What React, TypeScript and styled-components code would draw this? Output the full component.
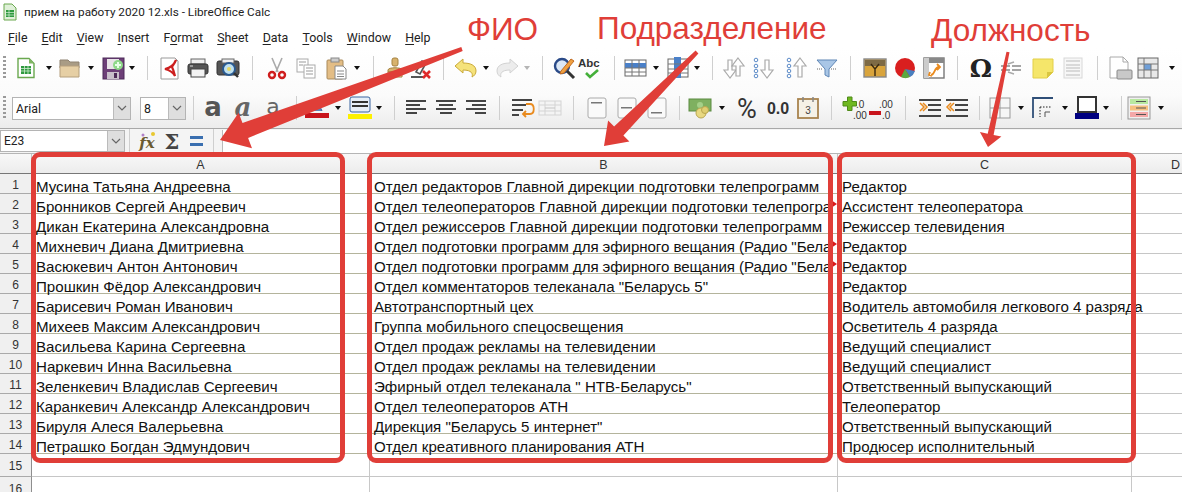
import React from "react";
import styled, { createGlobalStyle } from "styled-components";

const Global = createGlobalStyle`
  html, body { margin: 0; padding: 0; background: #fff; overflow: hidden; }
  #root { width: 1182px; height: 492px; }
`;

const UI = `Roboto, "Open Sans", sans-serif`;
const SHEET = `"Liberation Sans", Arial, sans-serif`;
const RED = "#e03e38";

const Page = styled.div`
  position: relative; width: 1182px; height: 492px; overflow: hidden; background: #fff;
  display: flex; flex-direction: column; font-family: ${UI}; color: #111;
  & > * { flex: none; }
`;
const TitleBar = styled.div`
  height: 24px; display: flex; align-items: center; gap: 7px; padding-left: 3px;
  font-size: 11.75px; color: #222;
`;
const MenuBar = styled.div`
  height: 24px; padding: 2px 0 0 8px; box-sizing: border-box; display: flex; align-items: center; gap: 14.1px;
  font-size: 12.4px; color: #222;
  u { text-underline-offset: 2px; }
`;
const MenuItem = styled.span``;
const ToolArea = styled.div`
  height: 80px; display: flex; flex-direction: column;
  background: linear-gradient(#ffffff 0%, #fbfbfb 60%, #ececec 100%);
  border-bottom: 1px solid #a8a8a8;
`;
const Toolbar = styled.div`
  height: 40px; display: flex; align-items: center; overflow: hidden;
`;
const Slot = styled.div<{ $w: number; $left?: boolean }>`
  flex: 0 0 ${p => p.$w}px; width: ${p => p.$w}px; height: 24px;
  display: flex; align-items: center; justify-content: ${p => (p.$left ? "flex-start" : "center")};
  svg { display: block; flex: none; }
`;
const Grip = styled.div`
  width: 3px; height: 24px; margin-left: 3px;
  background: repeating-linear-gradient(#9a9a9a 0 2px, transparent 2px 4px);
`;
const Caret = styled.div<{ $off?: boolean }>`
  width: 0; height: 0; border-left: 3.5px solid transparent; border-right: 3.5px solid transparent;
  border-top: 4px solid ${p => (p.$off ? "#b5b5b5" : "#111")};
`;
const Sep = styled.div`
  width: 1px; height: 24px; background: #cfcfcf;
`;
const Select = styled.div<{ $w: number; $ml: number }>`
  width: ${p => p.$w}px; margin-left: ${p => p.$ml}px; height: 23px; box-sizing: border-box; flex: none;
  display: flex; align-items: center; justify-content: space-between; background: #fff;
  border: 1px solid #b4b4b4; font-size: 12.4px; color: #222; padding-left: 3px;
`;
const SelectBtn = styled.div`
  width: 17px; height: 100%; box-sizing: border-box; background: #dedede; border-left: 1px solid #bbb;
  display: flex; align-items: center; justify-content: center;
`;
const FormulaBar = styled.div`
  height: 24px; display: flex; align-items: center; background: #f4f4f4;
  border-bottom: 1px solid #b5b5b5;
`;
const NameBox = styled(Select)`
  height: 22px; font-size: 12px;
`;
const FormulaBtn = styled.div<{ $w: number }>`
  flex: 0 0 ${p => p.$w}px; height: 24px; display: flex; justify-content: center; align-items: center;
`;
const FormulaInput = styled.div`
  flex: 1; height: 23px; background: #fff; border-left: 1px solid #bbb; margin-left: 4px;
`;
const Sheet = styled.div`
  display: grid; grid-template-columns: 32px 338px 468px 294px 88px;
  grid-auto-rows: min-content; font-family: ${SHEET};
`;
const ColHead = styled.div`
  height: 20px; box-sizing: border-box; padding-top: 3px; background: linear-gradient(#f8f8f8, #ececec);
  border-right: 1px solid #c4c4c4; border-bottom: 1px solid #777;
  display: flex; align-items: center; justify-content: center; font-size: 12.5px; color: #333;
`;
const RowHead = styled.div<{ $h?: number }>`
  box-sizing: border-box; height: ${p => p.$h || 20}px; padding-top: 2px; background: #f0f0f0;
  border-right: 1px solid #8e8e8e; border-bottom: 1px solid #aaa;
  display: flex; align-items: center; justify-content: center; font-size: 12px; color: #333;
`;
const Cell = styled.div<{ $blank?: boolean; $h?: number; $tight?: boolean }>`
  position: relative; box-sizing: border-box; height: ${p => p.$h || 20}px; padding: 2px 0 0 4px;
  border-right: 1px solid #c8c8c8; border-bottom: 1px solid ${p => (p.$blank ? "#c6c6c6" : "#b4b49c")};
  font-size: 15.1px; line-height: 22px; color: #111; white-space: nowrap;
  letter-spacing: ${p => (p.$tight ? "-0.07px" : "0")};
`;
const Marker = styled.i`
  position: absolute; top: 6px; right: 0; width: 0; height: 0;
  border-left: 6px solid #d81818; border-top: 4px solid transparent; border-bottom: 4px solid transparent;
`;
const Frame = styled.div<{ $x: number; $w: number }>`
  position: absolute; left: ${p => p.$x}px; top: 152px; width: ${p => p.$w}px; height: 311px;
  box-sizing: border-box; border: 5px solid ${RED}; border-radius: 9px; pointer-events: none;
`;
const Label = styled.div<{ $x: number; $y: number }>`
  position: absolute; left: ${p => p.$x}px; top: ${p => p.$y}px; font-family: ${SHEET};
  font-size: 31.5px; line-height: 34px; color: ${RED}; white-space: nowrap;
`;
const ArrowLayer = styled.svg`
  position: absolute; left: 0; top: 0; pointer-events: none;
`;

const Svg = ({ children, w = 24, h = 24 }: { children: React.ReactNode; w?: number; h?: number }) => (
  <svg width={w} height={h} viewBox={`0 0 ${w} ${h}`}>{children}</svg>
);
const Chevron = () => (
  <svg width="10" height="7" viewBox="0 0 10 7"><path d="M1 1l4 4 4-4" fill="none" stroke="#666" strokeWidth="1.2" /></svg>
);
const Lines = ({ ys, c = "#444", x = 3 }: { ys: [number, number][]; c?: string; x?: number }) => (
  <>{ys.map(([y, l], i) => <rect key={i} x={x} y={y} width={l} height="2" fill={c} />)}</>
);

const icons: Record<string, React.ReactNode> = {
  newdoc: <Svg><path d="M4 2.500h11l5 5v14H4z" fill="#fff" stroke="#6aa84f" strokeWidth="1.400"/><path d="M15 2.500l5 5h-5z" fill="#7fb561"/><rect x="7" y="10" width="10" height="8" fill="#2f9a3f"/><path d="M7 12.500h10M7 15h10M10.500 10v8M14 10v8" stroke="#cfeccf" strokeWidth=".8"/></Svg>,
  open: <Svg><path d="M2 4h8l2 2h9v6H2z" fill="#a99c85" stroke="#8f8270"/><path d="M2 21V10h19v11z" fill="#e6cfa4" stroke="#b59f7c"/></Svg>,
  save: <Svg><rect x="2" y="2" width="21" height="21" fill="#6d3f78" stroke="#4d2a58"/><rect x="6" y="3" width="12" height="10" fill="#e8e4e8"/><rect x="6" y="16" width="12" height="7" fill="#c9bfcb"/><rect x="13" y="17" width="3" height="5" fill="#4d2a58"/><circle cx="17" cy="9" r="5" fill="#8fd88a"/><path d="M17 6v6M14 9h6" stroke="#e6ffe6" strokeWidth="2"/></Svg>,
  pdf: <Svg><path d="M4 2h14l3 3v18H4z" fill="#fff" stroke="#9a9a9a"/><path d="M19 4c-2 5-6 8-11 9 4 1 8 3 10 7-1-4-2-7-3-9 1-2 3-4 4-7z" fill="none" stroke="#cc1f1f" strokeWidth="2.200"/></Svg>,
  print: <Svg><rect x="5" y="3" width="14" height="5" fill="#eee" stroke="#666"/><rect x="2" y="8" width="20" height="10" rx="2" fill="#555" stroke="#333"/><rect x="5" y="13" width="14" height="8" fill="#f3f3f3" stroke="#444"/><path d="M4 10h3" stroke="#ddd"/></Svg>,
  preview: <Svg><rect x="1" y="5" width="22" height="14" rx="2" fill="#555" stroke="#333"/><rect x="6" y="3" width="12" height="4" fill="#eee" stroke="#666"/><circle cx="13" cy="13" r="6" fill="#bfe0ef" stroke="#2a5a90" strokeWidth="2"/><circle cx="13" cy="13" r="2" fill="#e8d860"/><path d="M18 17l4 4" stroke="#333" strokeWidth="2.400"/></Svg>,
  cut: <Svg><path d="M7 2l6 14M17 2l-6 14" stroke="#aaa" strokeWidth="1.600"/><circle cx="7" cy="19" r="3" fill="none" stroke="#cf1d1d" strokeWidth="2.400"/><circle cx="17" cy="19" r="3" fill="none" stroke="#cf1d1d" strokeWidth="2.400"/></Svg>,
  copy: <Svg><rect x="3" y="3" width="11" height="13" fill="#fff" stroke="#aaa"/><rect x="10" y="9" width="11" height="13" fill="#fff" stroke="#aaa"/><path d="M5 6h7M5 9h4M12 12h7M12 15h7M12 18h7" stroke="#999"/></Svg>,
  paste: <Svg><rect x="3" y="4" width="16" height="19" rx="1" fill="#e3bd85" stroke="#a98a5a"/><rect x="7" y="2" width="8" height="4" fill="#ccc" stroke="#888"/><path d="M11 10h8l3 3v10H11z" fill="#fff" stroke="#888"/><path d="M13 15h7M13 18h7M13 20.500h7" stroke="#888"/></Svg>,
  clone: <Svg><rect x="9" y="2" width="6" height="8" rx="2" fill="#d8b26c" stroke="#a5823f"/><path d="M5 14c0-3 14-3 14 0v2H5z" fill="#d8b26c" stroke="#a5823f"/><path d="M5 16h14v5H5z" fill="#e8d8b0" stroke="#a5823f"/></Svg>,
  clear: <Svg><path d="M8 16l6-11 4 2-6 11z" fill="none" stroke="#555" strokeWidth="1.600"/><rect x="3" y="20" width="14" height="2" fill="#555"/><path d="M15 15l7 7M22 15l-7 7" stroke="#df2a2a" strokeWidth="2.600"/></Svg>,
  undo: <Svg><path d="M2 10l8-7v4c7 0 13 2 13 8 0 3-2 5-4 6 1-3 0-7-9-7v3z" fill="#f5e27a" stroke="#c9a93a"/></Svg>,
  redo: <Svg><path d="M22 10l-8-7v4C7 7 1 9 1 15c0 3 2 5 4 6-1-3 0-7 9-7v3z" fill="#ececec" stroke="#d2d2d2"/></Svg>,
  find: <Svg><circle cx="10" cy="10" r="7" fill="#dbe7f5" stroke="#2a4a88" strokeWidth="2.400"/><path d="M15 15l7 7" stroke="#333" strokeWidth="3"/><path d="M9 15l10-12 3 2-10 12-4 1z" fill="#f0a040" stroke="#c06a20"/></Svg>,
  spell: <Svg w={26} h={32}><text x="0" y="15" fontFamily={SHEET} fontSize="11.500" fontWeight="700" fill="#333">Abc</text><path d="M8 21l4 4 8-7" fill="none" stroke="#45b03a" strokeWidth="2.600"/></Svg>,
  rows: <Svg><rect x="2" y="4" width="21" height="16" fill="#fff" stroke="#666"/><rect x="2" y="7" width="21" height="5" fill="#4a80c8"/><path d="M9 4v16M16 4v16M2 12h21M2 16h21" stroke="#777"/></Svg>,
  cols: <Svg><rect x="2" y="3" width="20" height="18" fill="#fff" stroke="#666"/><rect x="8" y="1" width="7" height="21" fill="#4a80c8"/><path d="M2 8h20M2 13h20M2 17h20" stroke="#777"/></Svg>,
  sort: <Svg w={26}><path d="M9 22l-6-8h4V4h4v10h4z" fill="#fff" stroke="#aaa" strokeWidth="1.200"/><path d="M17 2l6 8h-4v10h-4V10h-4z" fill="#fff" stroke="#aaa" strokeWidth="1.200"/></Svg>,
  asc: <Svg><circle cx="4" cy="4" r="1.800" fill="none" stroke="#5a8ac8"/><circle cx="4" cy="10" r="1.800" fill="none" stroke="#5a8ac8"/><circle cx="4" cy="15" r="1.800" fill="none" stroke="#5a8ac8"/><circle cx="4" cy="20" r="1.800" fill="none" stroke="#5a8ac8"/><path d="M15 22l-6-8h4V4h4v10h4z" fill="#fff" stroke="#aaa" strokeWidth="1.200"/></Svg>,
  desc: <Svg><circle cx="4" cy="4" r="1.800" fill="none" stroke="#5a8ac8"/><circle cx="4" cy="10" r="1.800" fill="none" stroke="#5a8ac8"/><circle cx="4" cy="15" r="1.800" fill="none" stroke="#5a8ac8"/><circle cx="4" cy="20" r="1.800" fill="none" stroke="#5a8ac8"/><path d="M15 2l6 8h-4v11h-4V10H9z" fill="#fff" stroke="#aaa" strokeWidth="1.200"/></Svg>,
  filter: <Svg><path d="M2 4h20l-8 9v8l-4-2v-6z" fill="#a9c6e6" stroke="#5f86b5"/><path d="M2 13h6M16 13h6" stroke="#666" strokeDasharray="1 1"/></Svg>,
  image: <Svg><rect x="1" y="3" width="22" height="18" fill="#d9a43c" stroke="#888" strokeWidth="1.400"/><rect x="2" y="4" width="20" height="6" fill="#7d6a45"/><path d="M12 20v-7l-4-5M12 13l4-5" stroke="#3a2a10" strokeWidth="1.400" fill="none"/></Svg>,
  chart: <Svg><circle cx="12" cy="12" r="10" fill="#d91f1f"/><path d="M12 13l10 2a10 10 0 0 1-5 6z" fill="#4a80c0"/><path d="M12 13l5 8a10 10 0 0 1-9 0z" fill="#5aa840"/></Svg>,
  pivot: <Svg><rect x="2" y="2" width="20" height="20" fill="#fff" stroke="#777" strokeWidth="1.400"/><rect x="2" y="2" width="20" height="5" fill="#888"/><rect x="2" y="2" width="5" height="20" fill="#ccc"/><path d="M9 19c4 0 3-8 8-8M15 8l3 3-3 3M8 16l-1 3 3 1" fill="none" stroke="#e98b1f" strokeWidth="1.800"/></Svg>,
  omega: <Svg h={36}><text x="12" y="27" textAnchor="middle" fontFamily="'DejaVu Serif', serif" fontSize="25" fontWeight="700" fill="#222">Ω</text></Svg>,
  link: <Svg><path d="M2 10h9M2 14h9M13 10h9M13 14h9" stroke="#888" strokeWidth="1.500"/><path d="M9 8l6-2M9 16l6 2" stroke="#aaa" strokeWidth="1.500"/></Svg>,
  note: <Svg><path d="M2 3h20v13l-6 6H2z" fill="#f5e66a" stroke="#e2cf48"/><path d="M16 22v-6h6z" fill="#d9c640"/></Svg>,
  header: <Svg><rect x="3" y="2" width="18" height="20" fill="#f7f7f7" stroke="#d8d8d8"/><path d="M5 5h14M5 9h14M5 12h14M5 15h14M5 19h14" stroke="#d0d0d0" strokeWidth="1.500"/></Svg>,
  area: <Svg><path d="M1 1h13l5 5v16H1z" fill="#fff" stroke="#aaa"/><path d="M14 1v5h5" fill="none" stroke="#aaa"/><rect x="8" y="14" width="15" height="9" rx="1" fill="#c8c8c8" stroke="#888"/></Svg>,
  freeze: <Svg><rect x="2" y="2" width="20" height="20" fill="#e8e8e8" stroke="#666"/><rect x="8" y="8" width="7" height="6" fill="#6f9fd8"/><path d="M8 2v20M15 8v14M2 8h20M2 14h20" stroke="#777"/></Svg>,
  bold: <Svg w={28} h={36}><text x="14" y="26" textAnchor="middle" fontFamily="'DejaVu Sans', sans-serif" fontSize="26" fontWeight="700" fill="#555">a</text></Svg>,
  italic: <Svg w={28} h={36}><text x="14" y="26" textAnchor="middle" fontFamily="'DejaVu Serif', serif" fontSize="26" fontWeight="700" fontStyle="italic" fill="#666">a</text></Svg>,
  underline: <Svg w={28} h={36}><text x="14" y="24" textAnchor="middle" fontFamily="'DejaVu Sans', sans-serif" fontSize="22" fill="#666">a</text><rect x="6" y="27" width="16" height="2" fill="#666"/></Svg>,
  fontcolor: <Svg><path d="M7 15l5-11 5 11" fill="#5a85bd" stroke="#3a64a0"/><rect x="0" y="17" width="24" height="5" fill="#c8141c"/></Svg>,
  bgcolor: <Svg><rect x="2" y="1" width="20" height="15" rx="2" fill="#e6eef8" stroke="#3a64a0"/><path d="M4 6h16M4 10h16" stroke="#333" strokeWidth="1.800"/><rect x="0" y="18" width="24" height="5" fill="#fdf000"/></Svg>,
  left: <Svg><Lines x={2} ys={[[4, 20], [8, 14], [12, 20], [16, 11]]} /></Svg>,
  center: <Svg><rect x="2" y="4" width="20" height="2" fill="#444"/><rect x="5" y="8" width="14" height="2" fill="#444"/><rect x="2" y="12" width="20" height="2" fill="#444"/><rect x="6" y="16" width="12" height="2" fill="#444"/></Svg>,
  right: <Svg><rect x="2" y="4" width="20" height="2" fill="#444"/><rect x="8" y="8" width="14" height="2" fill="#444"/><rect x="2" y="12" width="20" height="2" fill="#444"/><rect x="11" y="16" width="11" height="2" fill="#444"/></Svg>,
  wrap: <Svg><Lines x={1} ys={[[3, 20], [8, 14], [13, 11], [18, 7]]} /><path d="M15 8h4c5 0 5 10 0 10h-6M15 15l-3 3 3 3" fill="none" stroke="#e98b1f" strokeWidth="1.800"/></Svg>,
  merge: <Svg><rect x="1" y="5" width="22" height="14" fill="#f4f4f4" stroke="#d4d4d4"/><path d="M1 9h22M1 15h22M7 5v14M17 5v14" stroke="#d4d4d4"/><path d="M7 12h10" stroke="#c4c4c4"/></Svg>,
  top: <Svg><rect x="3" y="2" width="18" height="20" rx="2" fill="#fafafa" stroke="#aaa"/><rect x="6" y="6" width="11" height="1.500" fill="#777"/></Svg>,
  mid: <Svg><rect x="3" y="2" width="18" height="20" rx="2" fill="#fafafa" stroke="#aaa"/><rect x="6" y="11" width="11" height="1.500" fill="#777"/></Svg>,
  bot: <Svg><rect x="3" y="2" width="18" height="20" rx="2" fill="#fafafa" stroke="#aaa"/><rect x="6" y="16" width="11" height="1.500" fill="#777"/></Svg>,
  currency: <Svg><rect x="1" y="3" width="22" height="12" fill="#7fb060" stroke="#5a8a40"/><circle cx="12" cy="9" r="3" fill="#a5d088"/><circle cx="13" cy="17" r="5" fill="#e8d880" stroke="#b9a650"/><circle cx="17" cy="14" r="3.500" fill="#e0ce70" stroke="#b9a650"/></Svg>,
  percent: <Svg w={30} h={38}><text x="15" y="29" textAnchor="middle" fontFamily={UI} fontSize="27" fill="#333">%</text></Svg>,
  zero: <Svg w={28}><text x="14" y="18" textAnchor="middle" fontFamily={SHEET} fontSize="16" fontWeight="700" fill="#333">0.0</text></Svg>,
  date: <Svg><rect x="2" y="3" width="20" height="19" fill="#f5f1e6" stroke="#a8834e" strokeWidth="1.800"/><path d="M7 1v5M17 1v5" stroke="#888" strokeWidth="1.500"/><text x="12" y="18" textAnchor="middle" fontFamily={SHEET} fontSize="10" fill="#444">3</text></Svg>,
  addd: <Svg w={26}><path d="M5.500 1h4.500v4.500h4.500v4.500h-4.500v4.500H5.500v-4.500H1V5.500h4.500z" fill="#6fb820" stroke="#4f8a18"/><text x="14" y="12" fontFamily={SHEET} fontSize="10" fill="#333">.0</text><text x="11" y="23" fontFamily={SHEET} fontSize="10" fill="#333">.00</text></Svg>,
  deld: <Svg w={26}><rect x="1" y="15" width="12" height="4" fill="#c8141c"/><text x="11" y="12" fontFamily={SHEET} fontSize="10" fill="#333">.00</text><text x="14" y="23" fontFamily={SHEET} fontSize="10" fill="#333">.0</text></Svg>,
  indent: <Svg><Lines x={1} ys={[[3, 22], [19, 22]]} /><Lines x={10} ys={[[8, 13], [13, 13]]} /><path d="M2 7l4 4-4 4M5 7l4 4-4 4" fill="none" stroke="#e98b1f" strokeWidth="1.500"/></Svg>,
  outdent: <Svg><Lines x={1} ys={[[3, 22], [19, 22]]} /><Lines x={10} ys={[[8, 13], [13, 13]]} /><path d="M6 7l-4 4 4 4M9 7l-4 4 4 4" fill="none" stroke="#e98b1f" strokeWidth="1.500"/></Svg>,
  borders: <Svg><rect x="2" y="2" width="20" height="20" fill="#f6f6f6" stroke="#999"/><path d="M12 2v20M2 12h20" stroke="#999"/></Svg>,
  bstyle: <Svg><path d="M2 22V2h20" fill="none" stroke="#2f4f78" strokeWidth="1.800"/><path d="M9 11h12M9 11v10" stroke="#222" strokeDasharray="1.500 1.500"/><path d="M14 16h5M14 16v5" stroke="#555"/></Svg>,
  lcolor: <Svg><rect x="3" y="1" width="18" height="15" fill="#fff" stroke="#333" strokeWidth="2"/><rect x="0" y="17" width="24" height="6" fill="#000080"/></Svg>,
  cond: <Svg><rect x="1" y="1" width="22" height="22" fill="#f0f0f0" stroke="#999"/><rect x="3" y="3" width="18" height="5" fill="#b8e8a0"/><rect x="3" y="9.500" width="18" height="5" fill="#f6c080"/><rect x="3" y="16" width="18" height="5" fill="#f4a8a8"/><path d="M9 5.500h10M9 12h10M9 18.500h10" stroke="#555"/></Svg>,
};

type Tool = [number, string];
// each entry is the horizontal centre of a toolbar item and what it is
const bar1: Tool[] = [[4,"grip"],[26,"newdoc"],[49,"^"],[70,"open"],[91,"^"],[112,"save"],[135,"^"],[145,"|"],[166,"pdf"],[197,"print"],[232,"preview"],[252,"|"],[274,"cut"],[306,"copy"],[339,"paste"],[360,"^"],[370,"|"],[393,"clone"],[422,"clear"],[444,"|"],[464,"undo"],[486,"^"],[507,"redo"],[530,"~"],[540,"|"],[561,"find"],[594,"spell"],[614,"|"],[634,"rows"],[656,"^"],[678,"cols"],[700,"^"],[710,"|"],[731,"sort"],[764,"asc"],[798,"desc"],[829,"filter"],[850,"|"],[872,"image"],[905,"chart"],[937,"pivot"],[957,"|"],[978,"omega"],[1011,"link"],[1043,"note"],[1076,"header"],[1097,"|"],[1118,"area"],[1151,"freeze"],[1172,"^"]];
const bar2: Tool[] = [[190,"|"],[210,"bold"],[243,"italic"],[275,"underline"],[297,"|"],[316,"fontcolor"],[338,"^"],[360,"bgcolor"],[382,"^"],[392,"|"],[413,"left"],[446,"center"],[479,"right"],[499,"|"],[520,"wrap"],[553,"merge"],[573,"|"],[594,"top"],[627,"mid"],[660,"bot"],[680,"|"],[698,"currency"],[722,"^"],[745,"percent"],[777,"zero"],[811,"date"],[832,"|"],[851,"addd"],[884,"deld"],[905,"|"],[927,"indent"],[960,"outdent"],[979,"|"],[1000,"borders"],[1021,"^"],[1042,"bstyle"],[1065,"^"],[1087,"lcolor"],[1109,"^"],[1119,"|"],[1138,"cond"],[1161,"^"]];

const Tools = ({ items, start }: { items: Tool[]; start: number }) => {
  let edge = start;
  return (
    <>
      {items.map(([c, kind], i) => {
        const next = items[i + 1];
        const end = next ? (c + next[0]) / 2 : 2 * c - edge;
        const w = end - edge;
        edge = end;
        return (
          <Slot key={i} $w={w} $left={kind === "grip"}>
            {kind === "grip" ? <Grip /> : kind === "|" ? <Sep /> : kind === "^" ? <Caret /> : kind === "~" ? <Caret $off /> : icons[kind]}
          </Slot>
        );
      })}
    </>
  );
};

const rows: [string, string, string][] = [
  ["Мусина Татьяна Андреевна", "Отдел редакторов Главной дирекции подготовки телепрограмм", "Редактор"],
  ["Бронников Сергей Андреевич", "Отдел телеоператоров Главной дирекции подготовки телепрогра", "Ассистент телеоператора"],
  ["Дикан Екатерина Александровна", "Отдел режиссеров Главной дирекции подготовки телепрограмм", "Режиссер телевидения"],
  ["Михневич Диана Дмитриевна", "Отдел подготовки программ для эфирного вещания (Радио \"Бела", "Редактор"],
  ["Васюкевич Антон Антонович", "Отдел подготовки программ для эфирного вещания (Радио \"Бела", "Редактор"],
  ["Прошкин Фёдор Александрович", "Отдел комментаторов телеканала \"Беларусь 5\"", "Редактор"],
  ["Барисевич Роман Иванович", "Автотранспортный цех", "Водитель автомобиля легкового 4 разряда"],
  ["Михеев Максим Александрович", "Группа мобильного спецосвещения", "Осветитель 4 разряда"],
  ["Васильева Карина Сергеевна", "Отдел продаж рекламы на телевидении", "Ведущий специалист"],
  ["Наркевич Инна Васильевна", "Отдел продаж рекламы на телевидении", "Ведущий специалист"],
  ["Зеленкевич Владислав Сергеевич", "Эфирный отдел телеканала \" НТВ-Беларусь\"", "Ответственный выпускающий"],
  ["Каранкевич Александр Александрович", "Отдел телеоператоров АТН", "Телеоператор"],
  ["Бируля Алеся Валерьевна", "Дирекция \"Беларусь 5 интернет\"", "Ответственный выпускающий"],
  ["Петрашко Богдан Эдмундович", "Отдел креативного планирования АТН", "Продюсер исполнительный"],
];
const clipped = [1, 3, 4];
const menu: [string, string, string][] = [["", "F", "ile"], ["", "E", "dit"], ["", "V", "iew"], ["", "I", "nsert"], ["F", "o", "rmat"], ["", "S", "heet"], ["", "D", "ata"], ["", "T", "ools"], ["", "W", "indow"], ["", "H", "elp"]];

const arrow = (x1: number, y1: number, x2: number, y2: number, tail: number, neck: number, head: number, wing: number) => {
  const len = Math.hypot(x2 - x1, y2 - y1);
  const ux = (x2 - x1) / len, uy = (y2 - y1) / len, nx = -uy, ny = ux;
  const bx = x2 - ux * head, by = y2 - uy * head;
  const p = [
    [x1 + nx * tail, y1 + ny * tail], [bx + nx * neck, by + ny * neck], [bx + nx * wing, by + ny * wing],
    [x2, y2], [bx - nx * wing, by - ny * wing], [bx - nx * neck, by - ny * neck], [x1 - nx * tail, y1 - ny * tail],
  ];
  return p.map(q => q.map(v => v.toFixed(1)).join(",")).join(" ");
};

export default function App() {
  return (
    <Page>
      <Global />
      <TitleBar>
        <Svg w={14} h={18}><path d="M1 1h8l4 4v12H1z" fill="#dff0d8" stroke="#6aa84f"/><rect x="3" y="7" width="8" height="7" fill="#2f9a3f"/><path d="M3 9.500h8M3 12h8M6 7v7" stroke="#d8f0d8" strokeWidth=".7"/></Svg>
        прием на работу 2020 12.xls - LibreOffice Calc
      </TitleBar>
      <MenuBar>
        {menu.map(([a, b, c]) => <MenuItem key={a + b + c}>{a}<u>{b}</u>{c}</MenuItem>)}
      </MenuBar>
      <ToolArea>
        <Toolbar><Tools items={bar1} start={0} /></Toolbar>
        <Toolbar>
          <Slot $w={9} $left><Grip /></Slot>
          <Select $w={119} $ml={3}>Arial<SelectBtn><Chevron /></SelectBtn></Select>
          <Select $w={46} $ml={9}>8<SelectBtn><Chevron /></SelectBtn></Select>
          <Tools items={bar2} start={186} />
        </Toolbar>
      </ToolArea>
      <FormulaBar>
        <NameBox $w={125} $ml={0}>E23<SelectBtn><Chevron /></SelectBtn></NameBox>
        <Slot $w={9}><Sep /></Slot>
        <FormulaBtn $w={25}>
          <Svg><text x="12" y="19" textAnchor="middle" fontFamily="'DejaVu Serif', serif" fontStyle="italic" fontWeight="700" fontSize="15" fill="#6a5a30">fx</text><circle cx="18" cy="5" r="2" fill="#e8c830"/><circle cx="8" cy="6" r="1.500" fill="#b080c8"/></Svg>
        </FormulaBtn>
        <FormulaBtn $w={25}>
          <Svg h={32}><text x="12" y="24" textAnchor="middle" fontFamily="'DejaVu Serif', serif" fontWeight="700" fontSize="21" fill="#444">Σ</text></Svg>
        </FormulaBtn>
        <FormulaBtn $w={25}>
          <Svg><rect x="5" y="7" width="13" height="3" fill="#3a6fb0"/><rect x="5" y="14" width="13" height="3" fill="#3a6fb0"/></Svg>
        </FormulaBtn>
        <Slot $w={9}><Sep /></Slot>
        <FormulaInput />
      </FormulaBar>
      <Sheet>
        <ColHead />
        <ColHead>A</ColHead>
        <ColHead>B</ColHead>
        <ColHead>C</ColHead>
        <ColHead>D</ColHead>
        {rows.map((r, i) => (
          <React.Fragment key={i}>
            <RowHead>{i + 1}</RowHead>
            <Cell>{r[0]}</Cell>
            <Cell $tight={i === 3 || i === 4}>{r[1]}{clipped.includes(i) && <Marker />}</Cell>
            <Cell>{r[2]}</Cell>
            <Cell $blank />
          </React.Fragment>
        ))}
        {[15, 16].map(n => (
          <React.Fragment key={n}>
            <RowHead $h={23}>{n}</RowHead>
            <Cell $blank $h={23} /><Cell $blank $h={23} /><Cell $blank $h={23} /><Cell $blank $h={23} />
          </React.Fragment>
        ))}
      </Sheet>
      <Frame $x={31} $w={314} />
      <Frame $x={367} $w={466} />
      <Frame $x={837} $w={299} />
      <Label $x={467} $y={12}>ФИО</Label>
      <Label $x={597} $y={11}>Подразделение</Label>
      <Label $x={931} $y={13}>Должность</Label>
      <ArrowLayer width="1182" height="492">
        <polygon fill={RED} points={arrow(462, 49, 220, 140, 2, 8, 27, 19)} />
        <polygon fill={RED} points={arrow(697, 52, 604, 146, 2, 6.5, 21, 15)} />
        <polygon fill={RED} points={arrow(1008, 52, 988, 147, 1.5, 3, 13, 11)} />
      </ArrowLayer>
    </Page>
  );
}
